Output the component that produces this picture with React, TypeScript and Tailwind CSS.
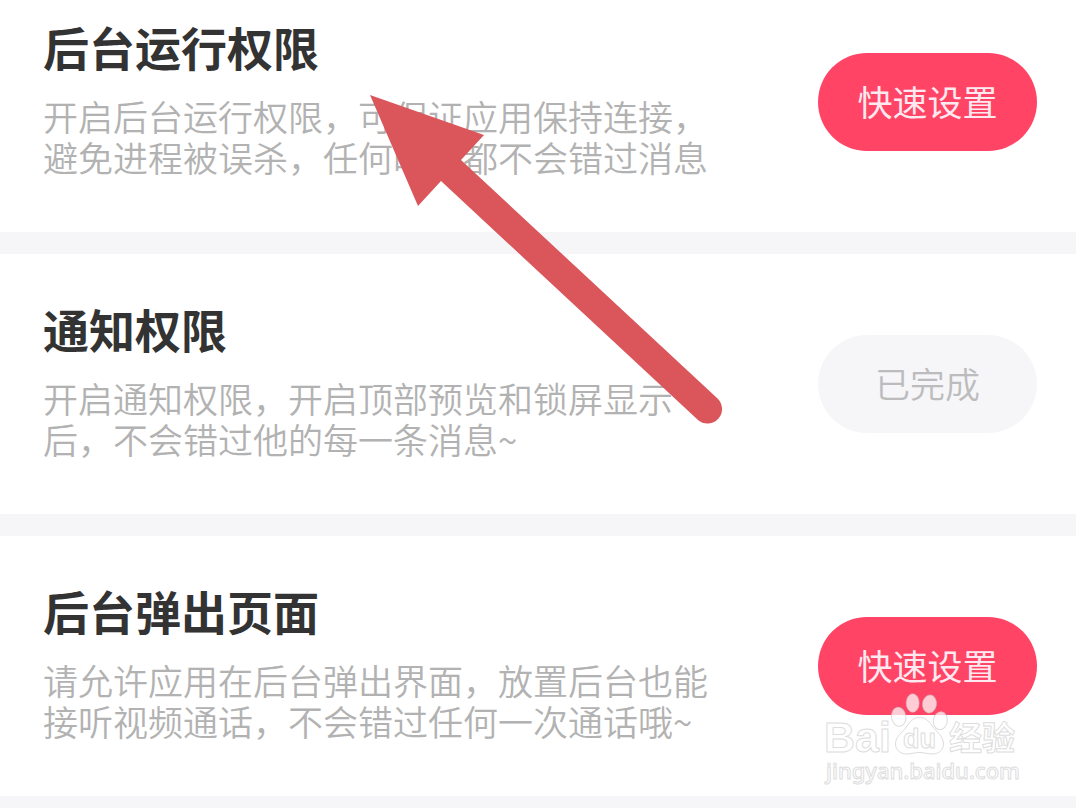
type Permission = {
  title: string;
  lines: string[];
  done: boolean;
};

const permissions: Permission[] = [
  {
    title: "后台运行权限",
    lines: ["开启后台运行权限，可保证应用保持连接，", "避免进程被误杀，任何时候都不会错过消息"],
    done: false,
  },
  {
    title: "通知权限",
    lines: ["开启通知权限，开启顶部预览和锁屏显示", "后，不会错过他的每一条消息~"],
    done: true,
  },
  {
    title: "后台弹出页面",
    lines: ["请允许应用在后台弹出界面，放置后台也能", "接听视频通话，不会错过任何一次通话哦~"],
    done: false,
  },
];

function PermissionCard({ title, lines, done }: Permission) {
  return (
    <section className="flex items-center justify-between gap-6 bg-white pr-[39px] pl-[43px] first:-mt-7">
      <div className="pt-[46px] pb-[55px]">
        <h2 className="text-[46px] leading-[56px] font-bold text-[#333333]">{title}</h2>
        <p className="mt-[21px] text-[35px] leading-[41px] font-[350] text-[#b2b2b2]">
          {lines.map((line) => (
            <span key={line} className="block whitespace-nowrap">
              {line}
            </span>
          ))}
        </p>
      </div>

      <button
        type="button"
        disabled={done}
        className={`h-[98px] w-[219px] shrink-0 rounded-full pb-0.5 text-[35px] ${
          done ? "bg-[#f6f6f8] font-[350] text-[#bcbcbe]" : "bg-[#ff4466] text-[#ffe9f0]"
        }`}
      >
        {done ? "已完成" : "快速设置"}
      </button>
    </section>
  );
}

function Arrow() {
  return (
    <svg
      className="pointer-events-none absolute top-[95px] left-[370px]"
      width="354"
      height="330"
      viewBox="0 0 354 330"
      fill="#db565b"
      aria-hidden="true"
    >
      <path d="M0 0 114 40 91 65 347 303A14.500 14.500 0 0 1 328 325L71 86 48 111Z" />
    </svg>
  );
}

function Watermark() {
  return (
    <svg
      className="pointer-events-none absolute top-[690px] right-[52px]"
      width="204"
      height="100"
      viewBox="0 0 204 100"
      fill="#ffffff"
      stroke="#dddddd"
      strokeLinejoin="round"
    >
      <g fillOpacity="0.72" stroke="#c0c0c0" strokeOpacity="0.55">
        <ellipse cx="78.700" cy="26.700" rx="7.200" ry="9.500" transform="rotate(-8 78.700 26.700)" />
        <ellipse cx="92.700" cy="13" rx="6.500" ry="9.200" />
        <ellipse cx="109.500" cy="14" rx="7" ry="9" transform="rotate(8 109.500 14)" />
        <ellipse cx="120.300" cy="30.700" rx="7" ry="9" transform="rotate(10 120.300 30.700)" />
        <path d="M99.500 27.500C93 27.500 89.500 32 86.500 37 83 42 75.500 46 75.500 54c0 6 5 10 11 10 5 0 8-1.500 13-1.500s8 1.500 13 1.500c6 0 11-4 11-10 0-8-7-12-10.500-17C109.500 32 106 27.500 99.500 27.500Z" />
      </g>
      <text x="4" y="62" className="font-['Liberation_Sans',sans-serif] text-[43px] font-bold">
        Bai
      </text>
      <text x="83" y="58" className="font-['Liberation_Sans',sans-serif] text-[27px] font-bold">
        du
      </text>
      <text x="129" y="60" className="text-[33px] font-bold">
        经验
      </text>
      <text x="6" y="89" className="font-['Noto_Sans',sans-serif] text-[22px] font-medium">
        jingyan.baidu.com
      </text>
    </svg>
  );
}

function App() {
  return (
    <main className="relative flex min-h-screen flex-col gap-[22px] overflow-hidden bg-[#f6f6f8] font-['Noto_Sans_CJK_SC',sans-serif]">
      {permissions.map((permission) => (
        <PermissionCard key={permission.title} {...permission} />
      ))}
      <Arrow />
      <Watermark />
    </main>
  );
}

export default App;
